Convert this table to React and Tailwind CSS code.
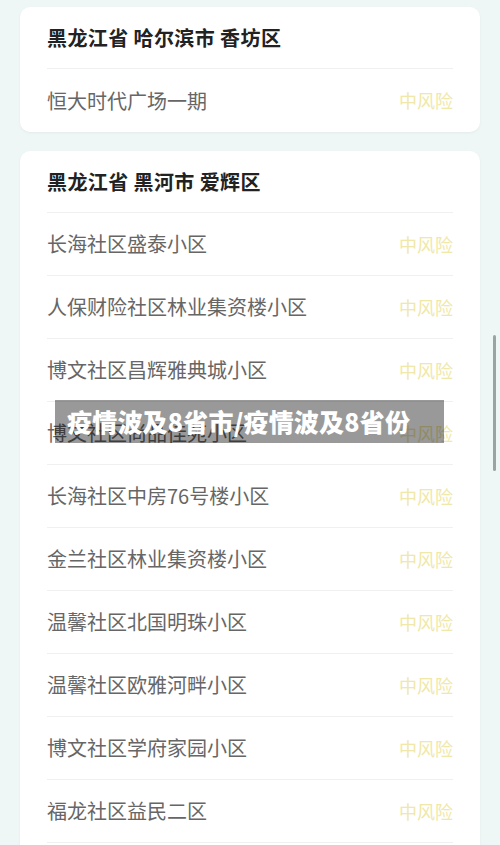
import React from 'react'

const cardA = ['恒大时代广场一期']
const cardB = [
  '长海社区盛泰小区',
  '人保财险社区林业集资楼小区',
  '博文社区昌辉雅典城小区',
  '博文社区尚品佳苑小区',
  '长海社区中房76号楼小区',
  '金兰社区林业集资楼小区',
  '温馨社区北国明珠小区',
  '温馨社区欧雅河畔小区',
  '博文社区学府家园小区',
  '福龙社区益民二区',
]

function Card({ title, rows, more }) {
  return (
    <div className="bg-white rounded-[10px] shadow-[0_1px_3px_rgba(0,0,0,0.05)] px-[27px]">
      <div className="h-[62px] flex items-center border-b border-[#f0f0f0]">
        <h2 className="text-[20px] font-bold text-[#222] tracking-[0.4px]">{title}</h2>
      </div>
      {rows.map((r, i) => (
        <div
          key={i}
          className={`h-[63px] flex items-center justify-between ${more || i < rows.length - 1 ? 'border-b border-[#f0f0f0]' : ''}`}
        >
          <span className="text-[20px] text-[#666]">{r}</span>
          <span className="text-[18px] text-[#efe8a8]">中风险</span>
        </div>
      ))}
      {more && <div className="h-[40px]" />}
    </div>
  )
}

export default function App() {
  return (
    <div
      className="relative h-[845px] overflow-hidden bg-[#eef7f6]"
      style={{ fontFamily: '"Noto Sans CJK SC", "Noto Sans", sans-serif' }}
    >
      <div className="flex flex-col gap-[19px] px-[20px] pt-[7px]">
        <Card title="黑龙江省 哈尔滨市 香坊区" rows={cardA} />
        <Card title="黑龙江省 黑河市 爱辉区" rows={cardB} more />
      </div>

      {/* scrollbar */}
      <div className="absolute left-[493px] top-[335px] w-[3px] h-[136px] rounded-full bg-[#9aa5a3]" />

      {/* caption overlay */}
      <div className="absolute left-[55px] top-[400px] w-[389px] h-[43px] bg-black/40 flex items-center pl-[12px]">
        <span className="text-[25px] font-black text-white leading-none tracking-[0.2px]">疫情波及8省市/疫情波及8省份</span>
      </div>
    </div>
  )
}
